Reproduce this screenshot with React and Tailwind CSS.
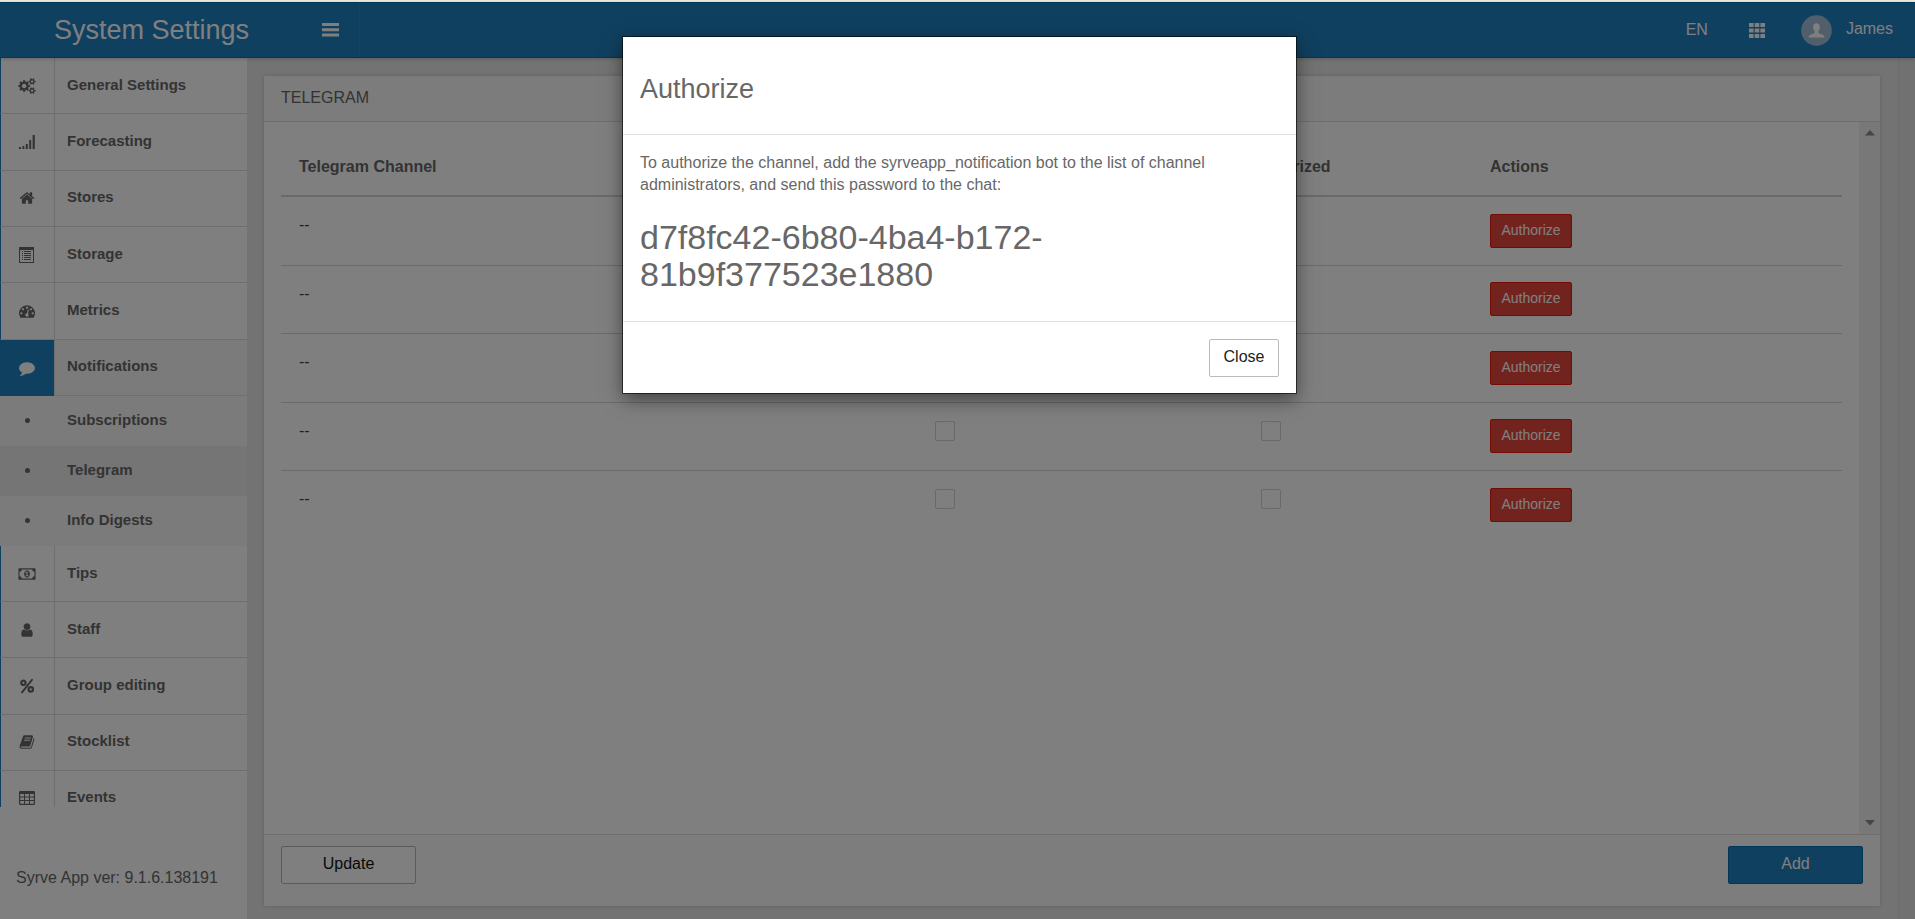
import React from "react";

const COG_SMALL =
  "v140q0 16-149 31-12 27-30 52 51 113 51 138 0 4-4 7-122 71-124 71-8 0-46-47t-52-68q-20 2-30 2t-30-2q-14 21-52 68t-46 47q-2 0-124-71-4-3-4-7 0-25 51-138-18-25-30-52-149-15-149-31v-140q0-16 149-31 13-29 30-52-51-113-51-138 0-4 4-7 4-2 35-20t59-34 30-16q8 0 46 46.5t52 67.5q20-2 30-2t30 2q51-71 92-112l6-2q4 0 124 70 4 3 4 7 0 25-51 138 17 23 30 52 149 15 149 31z";

const PATHS = {
  cogs:
    "M896 896q0-106-75-181t-181-75-181 75-75 181 75 181 181 75 181-75 75-181zm768 512q0-52-38-90t-90-38-90 38-38 90q0 53 37.5 90.5t90.5 37.5 90.5-37.5 37.5-90.5zm0-1024q0-52-38-90t-90-38-90 38-38 90q0 53 37.5 90.5t90.5 37.5 90.5-37.5 37.5-90.5zm-384 421v185q0 10-7 19.5t-16 10.5l-155 24q-11 35-32 76 34 48 90 115 7 11 7 20 0 12-7 19-23 30-82.5 89.5t-78.5 59.5q-11 0-21-7l-115-90q-37 19-77 31-11 108-23 155-7 24-30 24h-186q-11 0-20-7.5t-10-17.5l-23-153q-34-10-75-31l-118 89q-7 7-20 7-11 0-21-8-144-133-144-160 0-9 7-19 10-14 41-53t47-61q-23-44-35-82l-152-24q-10-1-17-9.5t-7-19.5v-185q0-10 7-19.5t16-10.5l155-24q11-35 32-76-34-48-90-115-7-11-7-20 0-12 7-20 22-30 82-89t79-59q11 0 21 7l115 90q34-18 77-32 11-108 23-154 7-24 30-24h186q11 0 20 7.5t10 17.5l23 153q34 10 75 31l118-89q8-7 20-7 11 0 21 8 144 133 144 160 0 8-7 19-12 16-42 54t-45 60q23 48 34 82l152 23q10 2 17 10.5t7 19.5zm640 533" +
    COG_SMALL +
    "m0-1024" +
    COG_SMALL,
  home:
    "M1472 992v480q0 26-19 45t-45 19h-384v-384h-256v384h-384q-26 0-45-19t-19-45v-480q0-1 .5-3t.5-3l575-474 575 474q1 2 1 6zm223-69l-62 74q-8 9-21 11h-3q-13 0-21-7l-692-577-692 577q-12 8-24 7-13-2-21-11l-62-74q-8-10-7-23.5t11-21.5l719-599q32-26 76-26t76 26l244 204v-195q0-14 9-23t23-9h192q14 0 23 9t9 23v408l219 182q10 8 11 21.5t-7 23.5z",
  gauge:
    "M384 1152q0-53-37.5-90.5t-90.5-37.5-90.5 37.5-37.5 90.5 37.5 90.5 90.5 37.5 90.5-37.5 37.5-90.5zm192-448q0-53-37.5-90.5t-90.5-37.5-90.5 37.5-37.5 90.5 37.5 90.5 90.5 37.5 90.5-37.5 37.5-90.5zm428 481l101-382q6-26-7.5-48.5t-38.5-29.5-48 6.5-30 39.5l-101 382q-60 5-107 43.5t-63 98.5q-20 77 20 146t117 89 146-20 89-117q16-60-6-117t-72-91zm660-33q0-53-37.5-90.5t-90.5-37.5-90.5 37.5-37.5 90.5 37.5 90.5 90.5 37.5 90.5-37.5 37.5-90.5zm-640-640q0-53-37.5-90.5t-90.5-37.5-90.5 37.5-37.5 90.5 37.5 90.5 90.5 37.5 90.5-37.5 37.5-90.5zm448 192q0-53-37.5-90.5t-90.5-37.5-90.5 37.5-37.5 90.5 37.5 90.5 90.5 37.5 90.5-37.5 37.5-90.5zm320 448q0 261-141 483-19 29-54 29h-1402q-35 0-54-29-141-221-141-483 0-182 71-348t191-286 286-191 348-71 348 71 286 191 191 286 71 348z",
  comment:
    "M1792 896q0 174-120 321.5t-326 233-450 85.5q-70 0-145-8-198 175-460 242-49 14-114 22h-5q-15 0-27-10.5t-16-27.5v-1q-3-4-.5-12t2-10 4.5-9.5l6-9 7-8.5 8-9q7-8 31-34.5t34.5-38 31-39.5 32.5-51 27-59 26-76q-157-89-247.5-220t-90.5-281q0-174 120-321.5t326-233 450-85.5 450 85.5 326 233 120 321.5z",
  money:
    "M768 1152h384v-96h-128v-448h-114l-148 137 77 80q42-37 55-57h2v288h-128v96zm512-256q0 70-21 142t-59.5 134-101.5 101-138 39-138-39-101.5-101-59.5-134-21-142 21-142 59.5-134 101.5-101 138-39 138 39 101.5 101 59.5 134 21 142zm512 256v-512q-106 0-181-75t-75-181h-1152q0 106-75 181t-181 75v512q106 0 181 75t75 181h1152q0-106 75-181t181-75zm128-832v1152q0 26-19 45t-45 19h-1792q-26 0-45-19t-19-45v-1152q0-26 19-45t45-19h1792q26 0 45 19t19 45z",
  user:
    "M1536 1399q0 109-62.5 187t-150.5 78h-854q-88 0-150.5-78t-62.5-187q0-85 8.5-160.5t31.5-152 58.5-131 94-89 134.5-34.5q131 128 313 128t313-128q76 0 134.5 34.5t94 89 58.5 131 31.5 152 8.5 160.5zm-256-887q0 159-112.5 271.5t-271.5 112.5-271.5-112.5-112.5-271.5 112.5-271.5 271.5-112.5 271.5 112.5 112.5 271.5z",
  book:
    "M1703 478q40 57 18 129l-275 906q-19 64-76.5 107.5t-122.5 43.5h-923q-77 0-148.5-53.5t-99.5-131.5q-24-67-2-127 0-4 3-27t4-37q1-8-3-21.5t-3-19.5q2-11 8-21t16.5-23.5 16.5-23.5q23-38 45-91.5t30-91.5q3-10 .5-30t-.5-28q3-11 17-28t17-23q21-36 42-92t25-90q1-9-2.5-32t.5-28q4-13 22-30.5t22-22.5q19-26 42.5-84.5t27.5-96.5q1-8-3-25.5t-2-26.5q2-8 9-18t18-23 17-21q8-12 16.5-30.5t15-35 16-36 19.5-32 26.5-23.5 36-11.5 47.5 5.5l-1 3q38-9 51-9h761q74 0 114 56t18 130l-274 906q-36 119-71.5 153.5t-128.5 34.5h-869q-27 0-38 15-11 16-1 43 24 70 144 70h923q29 0 56-15.5t35-41.5l300-987q7-22 5-57 38 15 59 43zm-1064 2q-4 13 2 22.5t20 9.5h608q13 0 25.5-9.5t16.5-22.5l21-64q4-13-2-22.5t-20-9.5h-608q-13 0-25.5 9.5t-16.5 22.5zm-83 256q-4 13 2 22.5t20 9.5h608q13 0 25.5-9.5t16.5-22.5l21-64q4-13-2-22.5t-20-9.5h-608q-13 0-25.5 9.5t-16.5 22.5z",
};

function Glyph({ name, wide }) {
  return (
    <svg
      viewBox={wide ? "0 0 1920 1792" : "0 0 1792 1792"}
      className={wide ? "h-4 w-[18px]" : "h-4 w-4"}
      fill="currentColor"
      aria-hidden="true"
    >
      <path d={PATHS[name]} />
    </svg>
  );
}

function SignalIcon() {
  return (
    <svg viewBox="0 0 16 16" className="h-4 w-4" fill="currentColor" aria-hidden="true">
      <rect x="0" y="13" width="2" height="2" />
      <rect x="3.4" y="12" width="2" height="3" />
      <rect x="6.8" y="10" width="2" height="5" />
      <rect x="10.2" y="6" width="2" height="9" />
      <rect x="13.6" y="1" width="2.2" height="14" />
    </svg>
  );
}

function ListIcon() {
  return (
    <svg viewBox="0 0 15 16" className="h-4 w-[15px]" fill="currentColor" aria-hidden="true">
      <path fillRule="evenodd" d="M0 0h15v16H0zM1 3v12h13V3z" />
      <path d="M3 4h1v1H3zM5 4h7v1H5zM3 6h1v1H3zM5 6h7v1H5zM3 8h1v1H3zM5 8h7v1H5zM3 10h1v1H3zM5 10h7v1H5zM3 12h1v1H3zM5 12h7v1H5z" />
    </svg>
  );
}

function PercentIcon() {
  return (
    <svg viewBox="0 0 16 16" className="h-4 w-4" fill="none" stroke="currentColor" aria-hidden="true">
      <circle cx="4.4" cy="4.8" r="2.2" strokeWidth="2.2" />
      <circle cx="11.8" cy="11.4" r="2.2" strokeWidth="2.2" />
      <path d="M13 1.8L3 14.4" strokeWidth="1.9" strokeLinecap="round" />
    </svg>
  );
}

function TableIcon() {
  return (
    <svg viewBox="0 0 16 14" className="h-[14px] w-4" fill="currentColor" aria-hidden="true">
      <path
        fillRule="evenodd"
        d="M1.2 0h13.6Q16 0 16 1.2v11.6Q16 14 14.8 14H1.2Q0 14 0 12.8V1.2Q0 0 1.2 0zM1.2 3v2.5h3.8V3zM6 3v2.5h4V3zM11 3v2.5h3.8V3zM1.2 6.5v2.6h3.8V6.5zM6 6.5v2.6h4V6.5zM11 6.5v2.6h3.8V6.5zM1.2 10.1v2.6h3.8v-2.6zM6 10.1v2.6h4v-2.6zM11 10.1v2.6h3.8v-2.6z"
      />
    </svg>
  );
}

const TOP_ITEMS = [
  { label: "General Settings", icon: <Glyph name="cogs" wide /> },
  { label: "Forecasting", icon: <SignalIcon /> },
  { label: "Stores", icon: <Glyph name="home" /> },
  { label: "Storage", icon: <ListIcon /> },
  { label: "Metrics", icon: <Glyph name="gauge" /> },
  { label: "Notifications", icon: <Glyph name="comment" />, active: true },
];

const SUB_ITEMS = [
  { label: "Subscriptions" },
  { label: "Telegram", active: true },
  { label: "Info Digests" },
];

const BOTTOM_ITEMS = [
  { label: "Tips", icon: <Glyph name="money" wide /> },
  { label: "Staff", icon: <Glyph name="user" /> },
  { label: "Group editing", icon: <PercentIcon /> },
  { label: "Stocklist", icon: <Glyph name="book" /> },
  { label: "Events", icon: <TableIcon /> },
];

function NavItem({ label, icon, active }) {
  return (
    <li className="flex min-h-0">
      <a href="#" className={active ? "flex flex-1 bg-[#f6f6f6]" : "flex flex-1 bg-white"}>
        <span
          className={
            active
              ? "flex w-[54px] items-center justify-center bg-[#1f80bf] text-white"
              : "flex w-[54px] items-center justify-center border-b border-l border-b-[#dcdcdc] border-l-[#1f80bf] pr-0.5"
          }
        >
          {icon}
        </span>
        <span className="flex flex-1 items-center border-b border-l border-[#dcdcdc] pb-0.5 pl-3">
          {label}
        </span>
      </a>
    </li>
  );
}

function Sidebar() {
  return (
    <aside className="flex w-[247px] shrink-0 flex-col bg-white text-[#676767]">
      <nav className="min-h-0 flex-1 overflow-hidden text-[15px] leading-5 font-bold">
        <ul className="grid h-[338px] grid-rows-6">
          {TOP_ITEMS.map((item) => (
            <NavItem key={item.label} {...item} />
          ))}
        </ul>
        <ul>
          {SUB_ITEMS.map((item) => (
            <li key={item.label}>
              <a
                href="#"
                className={
                  item.active
                    ? "flex h-[50px] items-center bg-[#ebebeb] pb-0.5"
                    : "flex h-[50px] items-center bg-[#f6f6f6] pb-0.5"
                }
              >
                <span className="flex w-[55px] justify-center">
                  <span className="size-[5px] rounded-full bg-[#676767]" />
                </span>
                <span className="pl-3">{item.label}</span>
              </a>
            </li>
          ))}
        </ul>
        <ul className="grid h-[281px] grid-rows-5">
          {BOTTOM_ITEMS.map((item) => (
            <NavItem key={item.label} {...item} />
          ))}
        </ul>
      </nav>
      <p className="h-28 px-4 pt-[60px] text-base leading-[22px]">Syrve App ver: 9.1.6.138191</p>
    </aside>
  );
}

function Header() {
  return (
    <header className="relative z-10 flex h-14 shrink-0 items-center border-y border-[#0070b0] bg-[#1f80bf] text-white shadow-[0_1px_4px_rgba(0,0,0,0.2)]">
      <h1 className="w-[302px] pl-[54px] text-[27px] leading-8">System Settings</h1>
      <button type="button" aria-label="Toggle menu" className="flex h-full w-[58px] items-center justify-center border-r border-[#2b86c2]">
        <svg viewBox="0 0 17 14" className="h-[14px] w-[17px]" fill="currentColor" aria-hidden="true">
          <path d="M0 0h17v3H0zM0 5.3h17v3H0zM0 10.6h17v3H0z" />
        </svg>
      </button>
      <div className="ml-auto flex items-center pr-[22px]">
        <button type="button" className="mr-[41px] text-base leading-5">EN</button>
        <button type="button" aria-label="Applications" className="mr-9">
          <svg viewBox="0 0 16 15" className="h-[15px] w-4" fill="currentColor" aria-hidden="true">
            <path d="M0 0h4.6v4H0zM5.7 0h4.6v4H5.7zM11.4 0H16v4h-4.6zM0 5.5h4.6v4H0zM5.7 5.5h4.6v4H5.7zM11.4 5.5H16v4h-4.6zM0 11h4.6v4H0zM5.7 11h4.6v4H5.7zM11.4 11H16v4h-4.6z" />
          </svg>
        </button>
        <a href="#" className="flex items-center gap-[14px]">
          <svg viewBox="0 0 31 31" className="size-[31px]" aria-hidden="true">
            <circle cx="15.5" cy="15.5" r="15.3" fill="#a0bed6" />
            <path
              d="M15.5 8.2c2.2 0 3.4 1.6 3.4 3.7 0 1.700-.7 3-1.500 3.900v1.600c0 .8.900 1.100 2.300 1.500 2.200.6 3.700 1.200 3.700 3.600H7.600c0-2.400 1.500-3 3.700-3.600 1.400-.4 2.300-.7 2.300-1.500v-1.600c-.8-.9-1.500-2.200-1.500-3.900 0-2.100 1.200-3.700 3.400-3.700z"
              fill="#fff"
            />
          </svg>
          <span className="pb-0.5 text-base leading-5">James</span>
        </a>
      </div>
    </header>
  );
}

function CheckCell({ label }) {
  return (
    <td className="pt-[18px] pl-8 align-top">
      <input
        type="checkbox"
        aria-label={label}
        className="block size-5 appearance-none rounded-xs border border-[#d2d2d2] bg-white"
      />
    </td>
  );
}

function ChannelTable() {
  return (
    <table className="w-full table-fixed border-collapse text-left text-base leading-[22px]">
      <colgroup>
        <col />
        <col className="w-[326px]" />
        <col className="w-[243px]" />
        <col className="w-[370px]" />
      </colgroup>
      <thead>
        <tr className="h-[74px] border-b-2 border-[#d4d4d4] text-[#676767]">
          <th className="px-[18px] pt-4">Telegram Channel</th>
          <th className="px-[18px] pt-4" aria-label="Enabled" />
          <th className="px-[18px] pt-4">Authorized</th>
          <th className="px-[18px] pt-4">Actions</th>
        </tr>
      </thead>
      <tbody>
        {[1, 2, 3, 4, 5].map((n) => (
          <tr key={n} className="border-b border-[#d4d4d4] last:border-b-0 odd:h-[69px] even:h-[68px]">
            <td className="px-[18px] pt-[17px] align-top text-[#444]">--</td>
            <CheckCell label={"Channel " + n + " enabled"} />
            <CheckCell label={"Channel " + n + " authorized"} />
            <td className="px-[18px]">
              <button
                type="button"
                className="block h-[34px] w-[82px] rounded-xs border border-[#e61808] bg-[#e6473c] pb-0.5 text-sm leading-5 text-white"
              >
                Authorize
              </button>
            </td>
          </tr>
        ))}
      </tbody>
    </table>
  );
}

function ScrollTrack() {
  return (
    <div className="flex w-[21px] shrink-0 flex-col items-center justify-between bg-[#f1f1f1] py-2 text-[#8a8a8a]" aria-hidden="true">
      <svg viewBox="0 0 10 6" className="h-[6px] w-[10px]" fill="currentColor">
        <path d="M5 0l5 5.500H0z" />
      </svg>
      <svg viewBox="0 0 10 6" className="h-[6px] w-[10px]" fill="currentColor">
        <path d="M0 0h10L5 5.500z" />
      </svg>
    </div>
  );
}

function Panel() {
  return (
    <section className="flex min-h-0 flex-1 flex-col bg-white shadow-[0_0_4px_rgba(0,0,0,0.18)]">
      <h2 className="h-[46px] shrink-0 border-b border-[#dcdcdc] bg-[#f8f8f8] px-[17px] pt-[11px] text-base leading-[22px] text-[#676767]">
        TELEGRAM
      </h2>
      <div className="flex min-h-0 flex-1">
        <div className="min-w-0 flex-1 overflow-hidden px-[17px]">
          <ChannelTable />
        </div>
        <ScrollTrack />
      </div>
      <footer className="flex h-[72px] shrink-0 justify-between border-t border-[#dcdcdc] bg-[#fbfbfb] px-[17px] pt-[11px]">
        <button type="button" className="h-[38px] w-[135px] rounded-xs border border-[#b6b6b6] bg-white pb-0.5 text-base leading-5 text-[#111]">
          Update
        </button>
        <button type="button" className="h-[38px] w-[135px] rounded-xs border border-[#006cb4] bg-[#1f80bf] pb-0.5 text-base leading-5 text-white">
          Add
        </button>
      </footer>
    </section>
  );
}

function AuthorizeDialog() {
  return (
    <div className="absolute inset-0 z-20 flex items-start justify-center bg-black/50 pt-[35px] pl-1">
      <div
        role="dialog"
        aria-modal="true"
        aria-labelledby="dialog-title"
        className="w-full max-w-[673px] bg-white text-[#676767] shadow-[0_0_0_1px_rgba(0,0,0,0.6),0_6px_18px_rgba(0,0,0,0.5)]"
      >
        <div className="border-b border-[#e0e0e0] px-[17px] pt-9 pb-[29px]">
          <h2 id="dialog-title" className="text-[27px] leading-8">Authorize</h2>
        </div>
        <div className="border-b border-[#e0e0e0] px-[17px] pt-[17px] pb-7">
          <p className="text-base leading-[22px]">
            To authorize the channel, add the syrveapp_notification bot to the list of channel administrators, and send
            this password to the chat:
          </p>
          <p className="pt-[23px] text-[34px] leading-[37px]">d7f8fc42-6b80-4ba4-b172-81b9f377523e1880</p>
        </div>
        <div className="flex justify-end px-[17px] pt-[17px] pb-4">
          <button type="button" className="h-[38px] w-[70px] rounded-xs border border-[#bbb] bg-white pb-0.5 text-base leading-5 text-[#222]">
            Close
          </button>
        </div>
      </div>
    </div>
  );
}

export default function App() {
  return (
    <div className="flex h-screen flex-col bg-[#eeebdf] pt-0.5 font-['Liberation_Sans',Arial,sans-serif]">
      <div className="relative flex min-h-0 flex-1 flex-col">
        <Header />
        <div className="flex min-h-0 flex-1">
          <Sidebar />
          <main className="flex min-w-0 flex-1 flex-col bg-[#e7e7e7] pt-[18px] pr-[18px] pb-[13px] pl-[17px]">
            <Panel />
          </main>
          <div className="w-[17px] shrink-0 border-l border-[#d8d8d8] bg-[#e3e3e3]" />
        </div>
        <AuthorizeDialog />
      </div>
    </div>
  );
}
